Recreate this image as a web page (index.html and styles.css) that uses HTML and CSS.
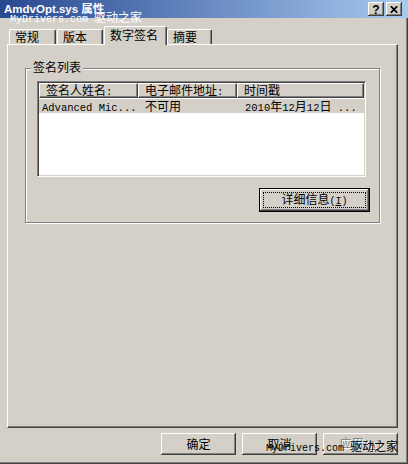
FILE: index.html
```html
<!DOCTYPE html>
<html lang="zh-CN">
<head>
<meta charset="utf-8">
<title>AmdvOpt.sys 属性</title>
<link rel="stylesheet" href="styles.css">
</head>
<body>
<div class="window">
  <div class="titlebar">
    <span class="title">AmdvOpt.sys 属性</span>
    <div class="caption-btns">
      <span class="cap-btn help">?</span>
      <span class="cap-btn close"><svg width="8" height="7" viewBox="0 0 8 7"><path d="M0.8 0.2 L7.2 6.8 M7.2 0.2 L0.8 6.8" stroke="#000" stroke-width="1.7" fill="none"/></svg></span>
    </div>
  </div>
  <div class="frame">
    <div class="tabstrip">
      <div class="tab t1">常规</div>
      <div class="tab t2">版本</div>
      <div class="tab t3 active">数字签名</div>
      <div class="tab t4">摘要</div>
    </div>
    <div class="panel">
      <div class="groupbox">
        <span class="legend">签名列表</span>
        <div class="listview">
          <div class="lv-header">
            <div class="lv-col c1">签名人姓名<span class="mono">:</span></div>
            <div class="lv-col c2">电子邮件地址<span class="mono">:</span></div>
            <div class="lv-col c3">时间戳</div>
          </div>
          <div class="lv-row selected">
            <div class="lv-cell c1"><span class="mono">Advanced Mic...</span></div>
            <div class="lv-cell c2">不可用</div>
            <div class="lv-cell c3"><span class="mono">2010</span>年<span class="mono">12</span>月<span class="mono">12</span>日<span class="mono"> ...</span></div>
          </div>
        </div>
        <div class="gb-actions">
          <button class="btn default details"><span class="focus"></span>详细信息<span class="mono">(<u>I</u>)</span></button>
        </div>
      </div>
    </div>
    <div class="footer">
      <button class="btn">确定</button>
      <button class="btn">取消</button>
      <button class="btn disabled">应用<span class="mono">(<u>A</u>)</span></button>
    </div>
  </div>
  <span class="wm wm-top"><span class="wm-lat">MyDrivers.com </span>驱动之家</span>
  <span class="wm wm-bottom"><span class="wm-lat">MyDrivers.com </span>驱动之家</span>
</div>
</body>
</html>
```

FILE: styles.css
```css
* { box-sizing: border-box; }
html, body { margin: 0; padding: 0; }
body {
  width: 408px;
  height: 464px;
  overflow: hidden;
  background: #d4d0c8;
  font-family: "Noto Sans CJK SC", "Liberation Sans", sans-serif;
  font-size: 12px;
  color: #000;
}
.window {
  position: relative;
  width: 408px;
  height: 464px;
  background: #d4d0c8;
  box-shadow: inset -1px -1px 0 #404040, inset -2px -2px 0 #808080;
}
.titlebar {
  height: 18px;
  display: flex;
  align-items: center;
  padding-left: 4px;
  background: linear-gradient(to right, #284890, #a6caf0);
}
.title {
  color: #fff;
  font-weight: bold;
  font-family: "Liberation Sans", "Noto Sans CJK SC", sans-serif;
  font-size: 11.5px;
  line-height: 14px;
}
.caption-btns {
  margin-left: auto;
  margin-right: 6px;
  display: flex;
  gap: 2px;
}
.cap-btn {
  width: 16px;
  height: 14px;
  background: #d4d0c8;
  box-shadow: inset -1px -1px 0 #404040, inset 1px 1px 0 #fff, inset -2px -2px 0 #808080;
  display: flex;
  align-items: center;
  justify-content: center;
}
.help {
  font-family: "Liberation Sans", sans-serif;
  font-weight: bold;
  font-size: 12px;
  line-height: 12px;
  padding-top: 1px;
}
.close svg { display: block; margin-top: 1px; }

.frame {
  padding: 0 10px 0 7px;
}
.tabstrip {
  height: 26px;
  display: flex;
  align-items: flex-end;
  position: relative;
  z-index: 1;
}
.tab {
  height: 15px;
  background: #d4d0c8;
  border-top: 1px solid #fff;
  border-left: 1px solid #fff;
  border-right: 1px solid #404040;
  box-shadow: inset -1px 0 0 #808080;
  border-radius: 2px 2px 0 0;
  padding-left: 5px;
  padding-top: 1px;
  line-height: 12px;
  white-space: nowrap;
}
.t1 { margin-left: 2px; width: 47px; }
.t2 { margin-left: 1px; width: 46px; }
.t3 { margin-left: 1px; width: 63px; }
.t4 { margin-left: 0; width: 45px; }
.tab.active {
  height: 19px;
  margin-bottom: -1px;
  padding-top: 2px;
}

.panel {
  height: 384px;
  border-top: 1px solid #fff;
  border-left: 1px solid #fff;
  border-right: 1px solid #404040;
  border-bottom: 1px solid #404040;
  box-shadow: inset -1px -1px 0 #808080;
  padding: 23px 0 0 17px;
}
.groupbox {
  position: relative;
  width: 355px;
  height: 155px;
  border: 1px solid #808080;
  box-shadow: inset 1px 1px 0 #fff, 1px 1px 0 #fff;
  padding: 12px 9px 0 11px;
}
.legend {
  position: absolute;
  top: -8px;
  left: 5px;
  padding: 0 2px;
  background: #d4d0c8;
  line-height: 12px;
}
.listview {
  width: 329px;
  height: 96px;
  background: #fff;
  border: 1px solid;
  border-color: #808080 #fff #fff #808080;
  box-shadow: inset 1px 1px 0 #404040, inset -1px -1px 0 #d4d0c8;
  padding: 1px;
}
.lv-header {
  display: flex;
  height: 15px;
}
.lv-col {
  height: 15px;
  background: #d4d0c8;
  border-top: 1px solid #fff;
  border-left: 1px solid #fff;
  border-right: 1px solid #404040;
  border-bottom: 1px solid #404040;
  box-shadow: inset -1px -1px 0 #808080;
  padding-left: 6px;
  line-height: 12px;
  white-space: nowrap;
}
.c1 { width: 99px; }
.c2 { width: 99px; }
.c3 { width: 127px; }
.lv-row {
  display: flex;
  height: 14px;
  margin-top: 1px;
}
.lv-row.selected { background: #d4d0c8; }
.lv-cell {
  line-height: 14px;
  white-space: nowrap;
}
.lv-cell.c1 { padding-left: 3px; }
.lv-cell.c2 { padding-left: 7px; }
.lv-cell.c3 { padding-left: 8px; }
.mono {
  font-family: "Liberation Mono", monospace;
  font-size: 10.5px;
}
.btn .mono { font-size: 10px; }
.gb-actions {
  display: flex;
  justify-content: flex-end;
  margin-top: 11px;
}
.btn {
  position: relative;
  width: 75px;
  height: 22px;
  padding: 0;
  border: none;
  background: #d4d0c8;
  box-shadow: inset -1px -1px 0 #404040, inset 1px 1px 0 #fff, inset -2px -2px 0 #808080;
  font-family: "Noto Sans CJK SC", "Liberation Sans", sans-serif;
  font-size: 12px;
  line-height: 12px;
  color: #000;
  text-align: center;
}
.btn u { text-decoration: underline; }
.btn.default {
  border: 1px solid #000;
}
.details {
  width: 111px;
  height: 24px;
}
.focus {
  position: absolute;
  top: 3px;
  left: 3px;
  right: 3px;
  bottom: 3px;
  border: 1px dotted #000;
}
.btn.disabled {
  color: #808080;
  text-shadow: 1px 1px 0 #fff;
}
.footer {
  display: flex;
  justify-content: flex-end;
  gap: 6px;
  margin-top: 5px;
}

.wm {
  position: absolute;
  white-space: nowrap;
  z-index: 5;
  line-height: 12px;
  font-size: 12px;
}
.wm-lat {
  font-family: "Liberation Mono", monospace;
  font-size: 10px;
}
.wm-top {
  left: 10px;
  top: 11px;
  color: #fff;
}
.wm-bottom {
  left: 266px;
  top: 440px;
  color: #000;
}
```
